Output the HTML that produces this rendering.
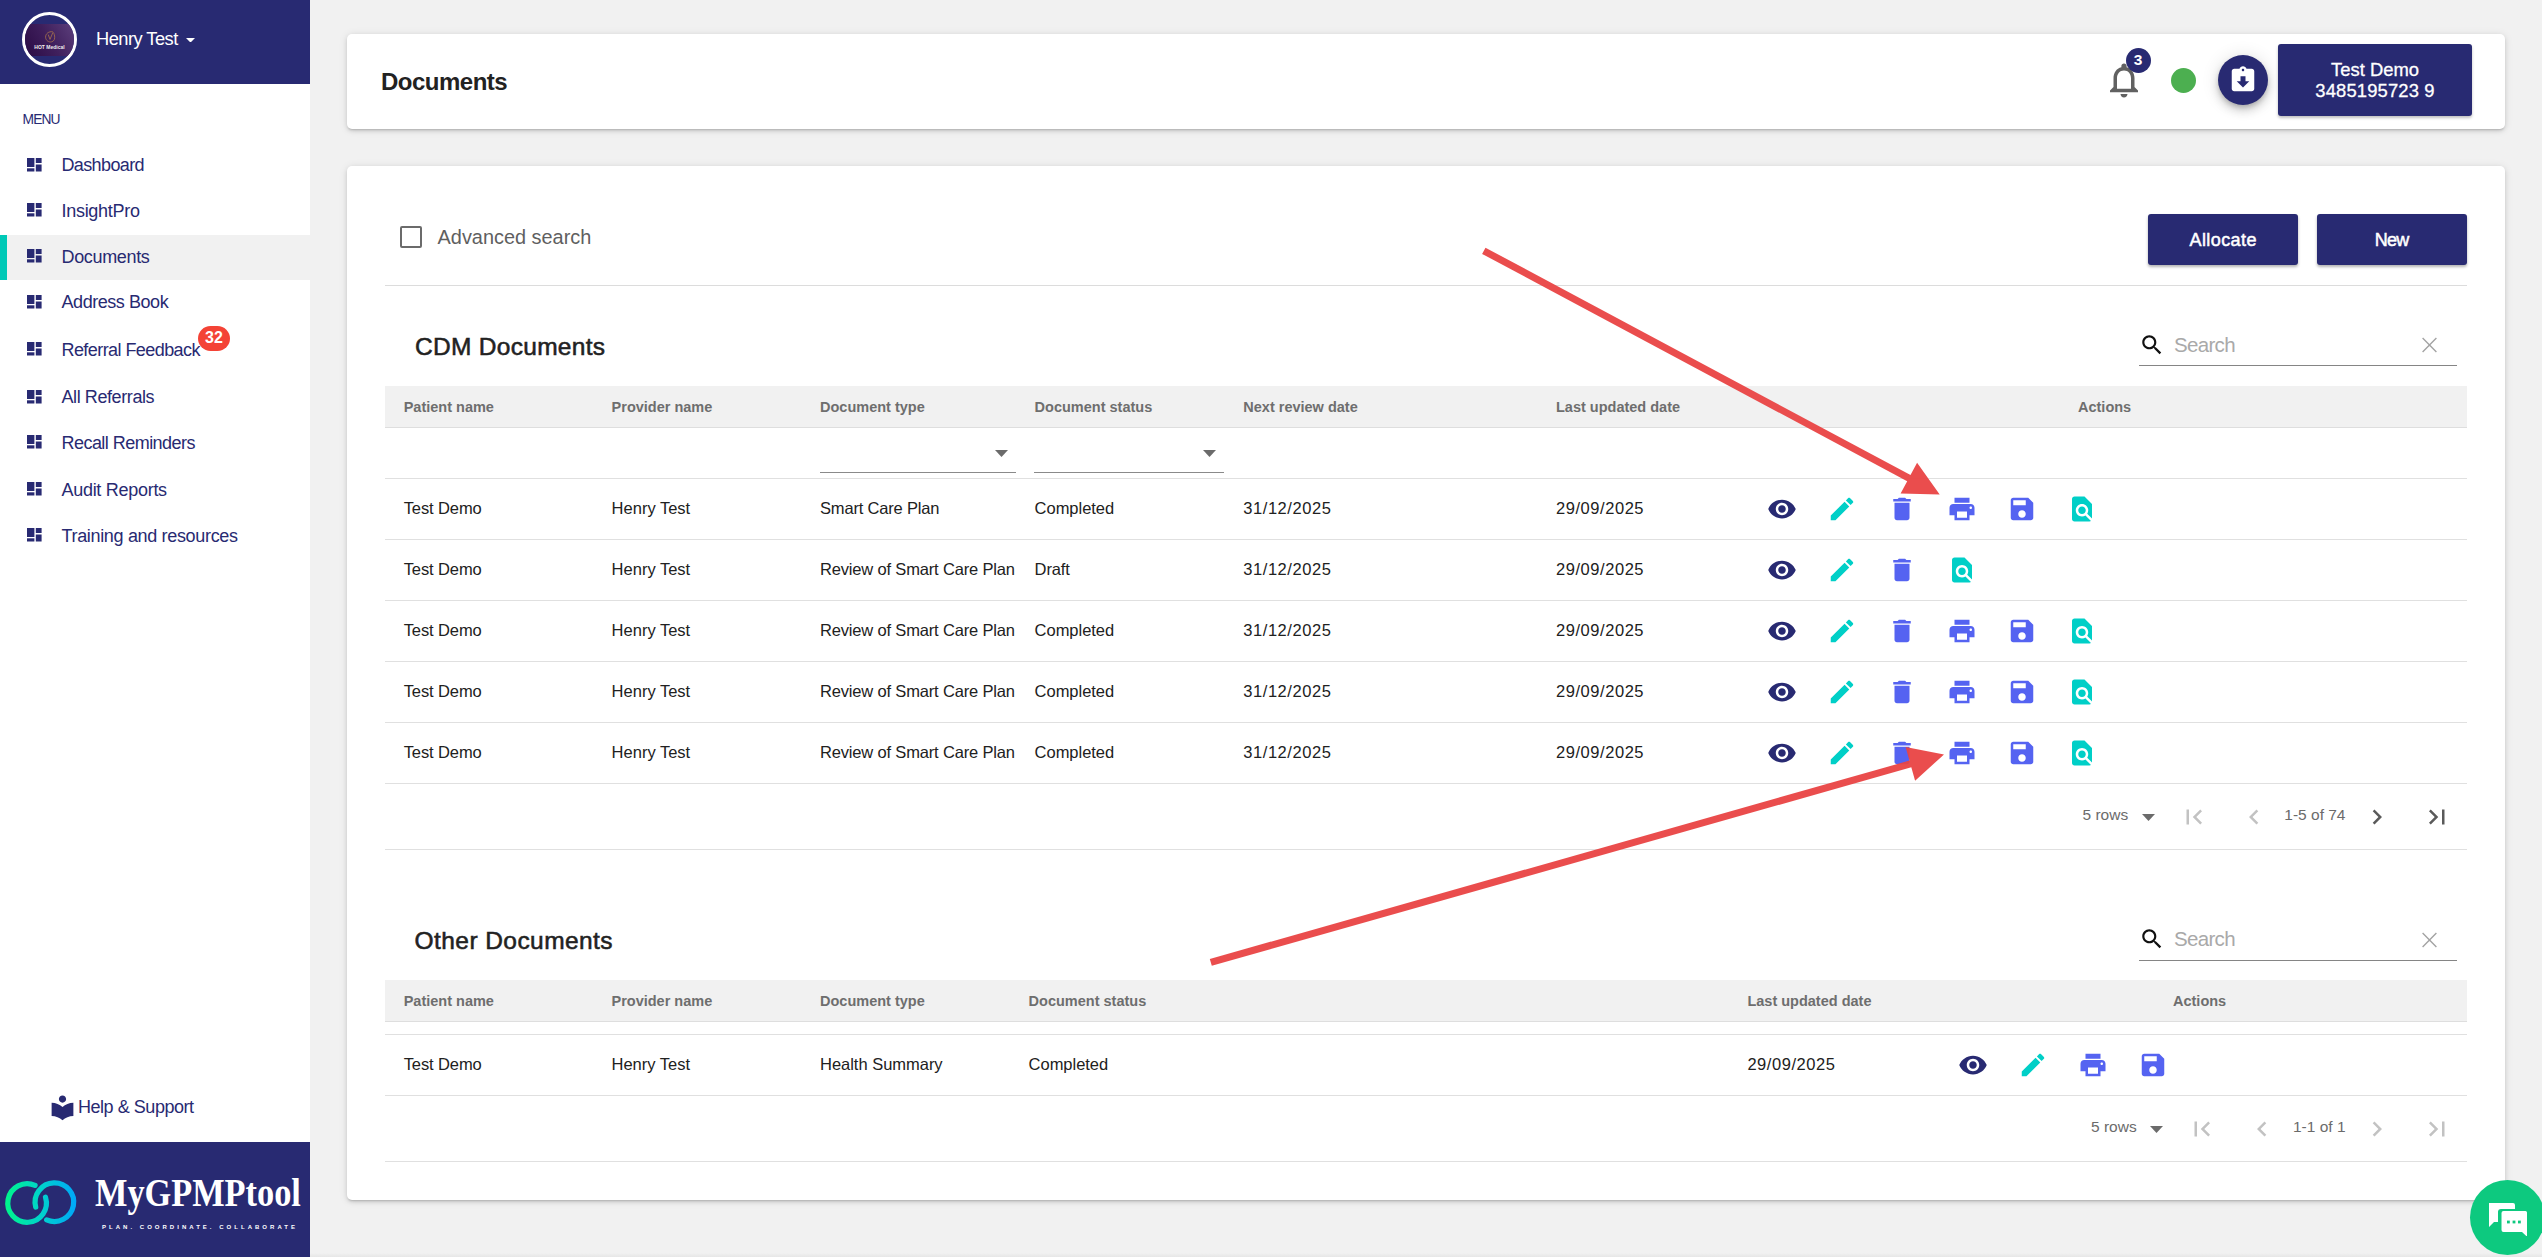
<!DOCTYPE html><html><head><meta charset="utf-8"><style>
html,body{margin:0;padding:0;}
body{width:2542px;height:1257px;background:#f1f1f1;position:relative;overflow:hidden;font-family:"Liberation Sans",sans-serif;}
.a{position:absolute;display:block;}
.t{position:absolute;white-space:nowrap;line-height:1;}
</style></head><body>

<div class="a" style="left:0px;top:0px;width:310px;height:1257px;background:#fff"></div>
<div class="a" style="left:0px;top:0px;width:310px;height:84px;background:#282a72"></div>
<div class="a" style="left:22px;top:12px;width:55px;height:55px;border-radius:50%;background:#282a72;box-sizing:border-box;border:3px solid #fff;overflow:hidden"></div>
<div class="a" style="left:25px;top:15px;width:49px;height:49px;border-radius:50%;overflow:hidden"><div class="a" style="left:0;top:9px;width:49px;height:32px;background:linear-gradient(60deg,#2a0b44 0%,#3f1f5c 50%,#5c3f7c 100%)"></div><div class="a" style="left:0;top:30px;width:49px;text-align:center;font-size:5px;line-height:5px;color:#eee;font-weight:700">HOT Medical</div><svg class="a" style="left:18px;top:15px" width="14" height="14" viewBox="0 0 14 14"><path d="M9.5 1.8C6 1.2 2.5 3.5 2.6 7.2c.1 3.3 3.2 5.4 6.2 4.6 2.6-.7 3.2-3.4 2.8-5.8C11.3 4.2 10.8 2.6 9.5 1.8z" fill="none" stroke="#a8734e" stroke-width="0.8"/><path d="M5.2 4.6L7 9.4 9.8 2.6" fill="none" stroke="#a8734e" stroke-width="0.8"/></svg></div>
<div class="t" style="left:96.0px;top:29.7px;font-size:18.3px;color:#fff;font-weight:400;;letter-spacing:-0.528px">Henry Test</div>
<svg class="a" style="left:186px;top:37.6px" width="9" height="4.6" viewBox="0 0 9 4.6"><path d="M0 0h9L4.5 4.6z" fill="#fff"/></svg>
<div class="t" style="left:22.6px;top:113.2px;font-size:13.8px;color:#282a72;font-weight:400;;letter-spacing:-0.950px">MENU</div>
<div class="a" style="left:0px;top:235px;width:310px;height:45px;background:#f1f1f1"></div>
<div class="a" style="left:0px;top:235px;width:7px;height:45px;background:#00c9b7"></div>
<svg class="a" style="left:27px;top:158px" width="15" height="14" viewBox="0 0 15 14"><g fill="#282a72"><rect x="0" y="0" width="7.4" height="9"/><rect x="0" y="10.3" width="7.4" height="3.2"/><rect x="8.8" y="0" width="5.8" height="5"/><rect x="8.8" y="6.5" width="5.8" height="7"/></g></svg>
<div class="t" style="left:61.5px;top:156.0px;font-size:18px;color:#282a72;font-weight:400;;letter-spacing:-0.631px">Dashboard</div>
<svg class="a" style="left:27px;top:203px" width="15" height="14" viewBox="0 0 15 14"><g fill="#282a72"><rect x="0" y="0" width="7.4" height="9"/><rect x="0" y="10.3" width="7.4" height="3.2"/><rect x="8.8" y="0" width="5.8" height="5"/><rect x="8.8" y="6.5" width="5.8" height="7"/></g></svg>
<div class="t" style="left:61.5px;top:201.6px;font-size:18px;color:#282a72;font-weight:400;;letter-spacing:-0.294px">InsightPro</div>
<svg class="a" style="left:27px;top:249px" width="15" height="14" viewBox="0 0 15 14"><g fill="#282a72"><rect x="0" y="0" width="7.4" height="9"/><rect x="0" y="10.3" width="7.4" height="3.2"/><rect x="8.8" y="0" width="5.8" height="5"/><rect x="8.8" y="6.5" width="5.8" height="7"/></g></svg>
<div class="t" style="left:61.5px;top:247.6px;font-size:18px;color:#282a72;font-weight:400;;letter-spacing:-0.344px">Documents</div>
<svg class="a" style="left:27px;top:295px" width="15" height="14" viewBox="0 0 15 14"><g fill="#282a72"><rect x="0" y="0" width="7.4" height="9"/><rect x="0" y="10.3" width="7.4" height="3.2"/><rect x="8.8" y="0" width="5.8" height="5"/><rect x="8.8" y="6.5" width="5.8" height="7"/></g></svg>
<div class="t" style="left:61.5px;top:293.1px;font-size:18px;color:#282a72;font-weight:400;;letter-spacing:-0.445px">Address Book</div>
<svg class="a" style="left:27px;top:342px" width="15" height="14" viewBox="0 0 15 14"><g fill="#282a72"><rect x="0" y="0" width="7.4" height="9"/><rect x="0" y="10.3" width="7.4" height="3.2"/><rect x="8.8" y="0" width="5.8" height="5"/><rect x="8.8" y="6.5" width="5.8" height="7"/></g></svg>
<div class="t" style="left:61.5px;top:340.6px;font-size:18px;color:#282a72;font-weight:400;;letter-spacing:-0.569px">Referral Feedback</div>
<svg class="a" style="left:27px;top:390px" width="15" height="14" viewBox="0 0 15 14"><g fill="#282a72"><rect x="0" y="0" width="7.4" height="9"/><rect x="0" y="10.3" width="7.4" height="3.2"/><rect x="8.8" y="0" width="5.8" height="5"/><rect x="8.8" y="6.5" width="5.8" height="7"/></g></svg>
<div class="t" style="left:61.5px;top:387.8px;font-size:18px;color:#282a72;font-weight:400;;letter-spacing:-0.413px">All Referrals</div>
<svg class="a" style="left:27px;top:435px" width="15" height="14" viewBox="0 0 15 14"><g fill="#282a72"><rect x="0" y="0" width="7.4" height="9"/><rect x="0" y="10.3" width="7.4" height="3.2"/><rect x="8.8" y="0" width="5.8" height="5"/><rect x="8.8" y="6.5" width="5.8" height="7"/></g></svg>
<div class="t" style="left:61.5px;top:433.7px;font-size:18px;color:#282a72;font-weight:400;;letter-spacing:-0.537px">Recall Reminders</div>
<svg class="a" style="left:27px;top:482px" width="15" height="14" viewBox="0 0 15 14"><g fill="#282a72"><rect x="0" y="0" width="7.4" height="9"/><rect x="0" y="10.3" width="7.4" height="3.2"/><rect x="8.8" y="0" width="5.8" height="5"/><rect x="8.8" y="6.5" width="5.8" height="7"/></g></svg>
<div class="t" style="left:61.5px;top:480.8px;font-size:18px;color:#282a72;font-weight:400;;letter-spacing:-0.288px">Audit Reports</div>
<svg class="a" style="left:27px;top:528px" width="15" height="14" viewBox="0 0 15 14"><g fill="#282a72"><rect x="0" y="0" width="7.4" height="9"/><rect x="0" y="10.3" width="7.4" height="3.2"/><rect x="8.8" y="0" width="5.8" height="5"/><rect x="8.8" y="6.5" width="5.8" height="7"/></g></svg>
<div class="t" style="left:61.5px;top:526.5px;font-size:18px;color:#282a72;font-weight:400;;letter-spacing:-0.331px">Training and resources</div>
<div class="a" style="left:198px;top:325.5px;width:32px;height:25px;background:#f44336;border-radius:13px"></div>
<div class="t" style="left:198.0px;top:329.7px;font-size:16px;color:#fff;font-weight:700;"><div style="width:32px;text-align:center">32</div></div>
<svg class="a" style="left:47.5px;top:1092.5px;" width="29" height="29" viewBox="0 0 24 24"><path fill="#282a72" d="M12 11.55C9.64 9.35 6.48 8 3 8v11c3.48 0 6.64 1.35 9 3.55 2.36-2.19 5.52-3.550 9-3.55V8c-3.48 0-6.64 1.35-9 3.55zM12 8c1.66 0 3-1.34 3-3s-1.34-3-3-3-3 1.34-3 3 1.34 3 3 3z"/></svg>
<div class="t" style="left:77.9px;top:1098.1px;font-size:18px;color:#282a72;font-weight:400;letter-spacing:-0.45px">Help &amp; Support</div>
<div class="a" style="left:0px;top:1142px;width:310px;height:115px;background:#282a72"></div>
<svg class="a" style="left:0px;top:1170px" width="85" height="65" viewBox="0 1170 85 65"><defs><linearGradient id="lg" gradientUnits="userSpaceOnUse" x1="5" y1="0" x2="77" y2="0"><stop offset="0" stop-color="#00f58a"/><stop offset="0.5" stop-color="#00d2cc"/><stop offset="1" stop-color="#00a6fa"/></linearGradient></defs>
<g fill="none" stroke="url(#lg)" stroke-width="5.2" stroke-linecap="round"><path d="M45.5 1197.2 A19.3 19.3 0 1 1 35.07 1185.4"/><path d="M35.72 1207.06 A19.3 19.3 0 1 1 46.64 1219.87"/></g></svg>
<div class="t" style="left:95.3px;top:1172.5px;font-size:40px;color:#fff;font-weight:700;font-family:'Liberation Serif',serif;transform:scaleX(0.858);transform-origin:0 0">MyGPMPtool</div>
<div class="t" style="left:102.0px;top:1223.9px;font-size:6px;color:#fff;font-weight:700;letter-spacing:3.02px">PLAN. COORDINATE. COLLABORATE</div>
<div class="a" style="left:347px;top:34px;width:2158px;height:95px;background:#fff;border-radius:5px;box-shadow:0px 2px 2px -1px rgba(0,0,0,0.15),0px 2px 4px 0px rgba(0,0,0,0.1),0px 1px 8px 0px rgba(0,0,0,0.1)"></div>
<div class="t" style="left:381.0px;top:69.9px;font-size:24px;color:#222;font-weight:700;letter-spacing:-0.5px">Documents</div>
<svg class="a" style="left:2103.0px;top:58.6px;" width="42" height="42" viewBox="0 0 24 24"><path fill="#616161" d="M12 22c1.1 0 2-.9 2-2h-4c0 1.1.89 2 2 2zm6-6v-5c0-3.07-1.64-5.64-4.5-6.32V4c0-.83-.67-1.5-1.5-1.5s-1.5.67-1.5 1.5v.68C7.63 5.36 6 7.92 6 11v5l-2 2v1h16v-1l-2-2zm-2 1H8v-6c0-2.48 1.51-4.5 4-4.5s4 2.02 4 4.5v6z"/></svg>
<div class="a" style="left:2125.5px;top:47.5px;width:25px;height:25px;background:#282a72;border-radius:50%"></div>
<div class="t" style="left:2125.5px;top:51.9px;font-size:15.5px;color:#fff;font-weight:700;"><div style="width:25px;text-align:center">3</div></div>
<div class="a" style="left:2170.5px;top:67.5px;width:25px;height:25px;background:#4caf50;border-radius:50%"></div>
<div class="a" style="left:2218px;top:55px;width:50px;height:50px;background:#282a72;border-radius:50%;box-shadow:0px 3px 5px -1px rgba(0,0,0,0.2),0px 6px 10px 0px rgba(0,0,0,0.14),0px 1px 18px 0px rgba(0,0,0,0.12)"></div>
<svg class="a" style="left:2228.0px;top:65.0px;" width="30" height="30" viewBox="0 0 24 24"><path fill="#fff" d="M19 3h-4.18C14.4 1.84 13.3 1 12 1c-1.3 0-2.4.84-2.82 2H5c-1.1 0-2 .9-2 2v14c0 1.1.9 2 2 2h14c1.1 0 2-.9 2-2V5c0-1.1-.9-2-2-2zm-7 0c.55 0 1 .45 1 1s-.45 1-1 1-1-.45-1-1 .45-1 1-1zm0 15l-5-5h3V9h4v4h3l-5 5z"/></svg>
<div class="a" style="left:2278px;top:44px;width:194px;height:72px;background:#282a72;border-radius:3px;box-shadow:0 2px 3px rgba(0,0,0,0.25)"></div>
<div class="t" style="left:2278.0px;top:60.7px;font-size:18.4px;color:#fff;font-weight:400;-webkit-text-stroke:0.3px #fff"><div style="width:194px;text-align:center">Test Demo</div></div>
<div class="t" style="left:2278.0px;top:81.6px;font-size:18.4px;color:#fff;font-weight:400;-webkit-text-stroke:0.3px #fff"><div style="width:194px;text-align:center;letter-spacing:0.15px">3485195723 9</div></div>
<div class="a" style="left:347px;top:166px;width:2158px;height:1034px;background:#fff;border-radius:5px;box-shadow:0px 2px 2px -1px rgba(0,0,0,0.15),0px 2px 4px 0px rgba(0,0,0,0.1),0px 1px 8px 0px rgba(0,0,0,0.1)"></div>
<div class="a" style="left:400px;top:226px;width:22px;height:22px;box-sizing:border-box;border:2px solid #6b6b6b;border-radius:2px"></div>
<div class="t" style="left:437.6px;top:228.0px;font-size:19.9px;color:#5f5f5f;font-weight:400;">Advanced search</div>
<div class="a" style="left:2148px;top:214px;width:150px;height:51px;background:#282a72;border-radius:3px;box-shadow:0 2px 3px rgba(0,0,0,0.3)"></div>
<div class="a" style="left:2317px;top:214px;width:150px;height:51px;background:#282a72;border-radius:3px;box-shadow:0 2px 3px rgba(0,0,0,0.3)"></div>
<div class="t" style="left:2148.0px;top:230.8px;font-size:18px;color:#fff;font-weight:400;-webkit-text-stroke:0.5px #fff"><div style="width:150px;text-align:center;letter-spacing:0.42px;text-indent:0.42px">Allocate</div></div>
<div class="t" style="left:2317.0px;top:230.8px;font-size:18px;color:#fff;font-weight:400;-webkit-text-stroke:0.5px #fff"><div style="width:150px;text-align:center;letter-spacing:-0.8px;text-indent:-0.8px">New</div></div>
<div class="a" style="left:385px;top:285px;width:2082px;height:1px;background:#dcdcdc"></div>
<div class="t" style="left:415.0px;top:334.6px;font-size:24.5px;color:#222;font-weight:400;-webkit-text-stroke:0.55px #222;letter-spacing:0.292px">CDM Documents</div>
<div class="a" style="left:2139px;top:365px;width:318px;height:1px;background:#858585"></div>
<svg class="a" style="left:2138.5px;top:331.5px;" width="26" height="26" viewBox="0 0 24 24"><path fill="#111" d="M15.5 14h-.79l-.28-.27C15.41 12.59 16 11.11 16 9.5 16 5.91 13.09 3 9.5 3S3 5.91 3 9.5 5.910 16 9.5 16c1.61 0 3.09-.59 4.23-1.57l.27.28v.79l5 4.99L20.49 19l-4.99-5zm-6 0C7.01 14 5 11.99 5 9.5S7.01 5 9.5 5 14 7.01 14 9.5 11.99 14 9.5 14z"/></svg>
<div class="t" style="left:2174.0px;top:334.9px;font-size:20.5px;color:#a9a9a9;font-weight:400;;letter-spacing:-0.670px">Search</div>
<svg class="a" style="left:2420px;top:335px" width="20" height="20" viewBox="0 0 20 20"><path d="M2.6 3.1L16.4 16.9M16.4 3.1L2.6 16.9" stroke="#a3a3a3" stroke-width="1.4" fill="none"/></svg>
<div class="a" style="left:385px;top:386px;width:2082px;height:41px;background:#f1f1f1"></div>
<div class="a" style="left:385px;top:427px;width:2082px;height:1px;background:#dedede"></div>
<div class="t" style="left:403.7px;top:399.7px;font-size:14.5px;color:#6e6e6e;font-weight:700;">Patient name</div>
<div class="t" style="left:611.6px;top:399.7px;font-size:14.5px;color:#6e6e6e;font-weight:700;">Provider name</div>
<div class="t" style="left:820.0px;top:399.7px;font-size:14.5px;color:#6e6e6e;font-weight:700;">Document type</div>
<div class="t" style="left:1034.6px;top:399.7px;font-size:14.5px;color:#6e6e6e;font-weight:700;">Document status</div>
<div class="t" style="left:1243.3px;top:399.7px;font-size:14.5px;color:#6e6e6e;font-weight:700;">Next review date</div>
<div class="t" style="left:1556.0px;top:399.7px;font-size:14.5px;color:#6e6e6e;font-weight:700;">Last updated date</div>
<div class="t" style="left:2078.0px;top:399.7px;font-size:14.5px;color:#6e6e6e;font-weight:700;">Actions</div>
<div class="a" style="left:820px;top:472px;width:196px;height:1.2px;background:#8a8a8a"></div>
<div class="a" style="left:1034px;top:472px;width:190px;height:1.2px;background:#8a8a8a"></div>
<svg class="a" style="left:995px;top:450px" width="13" height="7" viewBox="0 0 13 7"><path d="M0 0h13L6.5 7z" fill="#6b6b6b"/></svg>
<svg class="a" style="left:1203px;top:450px" width="13" height="7" viewBox="0 0 13 7"><path d="M0 0h13L6.5 7z" fill="#6b6b6b"/></svg>
<div class="a" style="left:385px;top:478px;width:2082px;height:1px;background:#e0e0e0"></div>
<div class="t" style="left:403.7px;top:499.6px;font-size:16.5px;color:#212121;font-weight:400;;letter-spacing:-0.106px">Test Demo</div>
<div class="t" style="left:611.6px;top:499.6px;font-size:16.5px;color:#212121;font-weight:400;;letter-spacing:0.006px">Henry Test</div>
<div class="t" style="left:820.0px;top:499.6px;font-size:16.5px;color:#212121;font-weight:400;;letter-spacing:-0.182px">Smart Care Plan</div>
<div class="t" style="left:1034.6px;top:499.6px;font-size:16.5px;color:#212121;font-weight:400;;letter-spacing:-0.025px">Completed</div>
<div class="t" style="left:1243.3px;top:499.6px;font-size:16.5px;color:#212121;font-weight:400;letter-spacing:0.55px">31/12/2025</div>
<div class="t" style="left:1556.0px;top:499.6px;font-size:16.5px;color:#212121;font-weight:400;letter-spacing:0.55px">29/09/2025</div>
<svg class="a" style="left:1766.5px;top:494.0px;" width="30" height="30" viewBox="0 0 24 24"><path fill="#282a72" d="M12 4.5C7 4.5 2.73 7.61 1 12c1.730 4.39 6 7.5 11 7.5s9.27-3.11 11-7.5c-1.73-4.39-6-7.5-11-7.5zM12 17c-2.76 0-5-2.24-5-5s2.24-5 5-5 5 2.240 5 5-2.24 5-5 5zm0-8c-1.66 0-3 1.34-3 3s1.34 3 3 3 3-1.34 3-3-1.34-3-3-3z"/></svg>
<svg class="a" style="left:1826.5px;top:494.0px;" width="30" height="30" viewBox="0 0 24 24"><path fill="#00cfc7" d="M3 17.25V21h3.75L17.81 9.94l-3.75-3.75L3 17.25zM20.71 7.04c.39-.39.39-1.02 0-1.41l-2.34-2.34c-.39-.39-1.02-.39-1.41 0l-1.83 1.83 3.75 3.75 1.83-1.83z"/></svg>
<svg class="a" style="left:1886.5px;top:494.0px;" width="30" height="30" viewBox="0 0 24 24"><path fill="#5563f1" d="M6 19c0 1.1.9 2 2 2h8c1.1 0 2-.9 2-2V7H6v12zM19 4h-3.5l-1-1h-5l-1 1H5v2h14V4z"/></svg>
<svg class="a" style="left:1946.5px;top:494.0px;" width="30" height="30" viewBox="0 0 24 24"><path fill="#5563f1" d="M19 8H5c-1.66 0-3 1.34-3 3v6h4v4h12v-4h4v-6c0-1.66-1.34-3-3-3zm-3 11H8v-5h8v5zm3-7c-.55 0-1-.45-1-1s.45-1 1-1 1 .45 1 1-.45 1-1 1zm-1-9H6v4h12V3z"/></svg>
<svg class="a" style="left:2006.5px;top:494.0px;" width="30" height="30" viewBox="0 0 24 24"><path fill="#5563f1" d="M17 3H5c-1.11 0-2 .9-2 2v14c0 1.1.89 2 2 2h14c1.1 0 2-.9 2-2V7l-4-4zm-5 16c-1.66 0-3-1.34-3-3s1.34-3 3-3 3 1.34 3 3-1.34 3-3 3zm3-10H5V5h10v4z"/></svg>
<svg class="a" style="left:2066.5px;top:494.0px;" width="30" height="30" viewBox="0 0 24 24"><path fill="#00cfc7" d="M20 19.59V8l-6-6H6c-1.1 0-1.99.9-1.99 2L4 20c0 1.1.89 2 1.99 2H18c.45 0 .85-.15 1.19-.4l-4.43-4.43c-.8.52-1.74.83-2.76.83-2.76 0-5-2.24-5-5s2.24-5 5-5 5 2.24 5 5c0 1.02-.31 1.96-.83 2.75L20 19.59zM9 13c0 1.66 1.34 3 3 3s3-1.34 3-3-1.34-3-3-3-3 1.34-3 3z"/></svg>
<div class="a" style="left:385px;top:539px;width:2082px;height:1px;background:#e0e0e0"></div>
<div class="t" style="left:403.7px;top:560.6px;font-size:16.5px;color:#212121;font-weight:400;;letter-spacing:-0.106px">Test Demo</div>
<div class="t" style="left:611.6px;top:560.6px;font-size:16.5px;color:#212121;font-weight:400;;letter-spacing:0.006px">Henry Test</div>
<div class="t" style="left:820.0px;top:560.6px;font-size:16.5px;color:#212121;font-weight:400;;letter-spacing:-0.171px">Review of Smart Care Plan</div>
<div class="t" style="left:1034.6px;top:560.6px;font-size:16.5px;color:#212121;font-weight:400;;letter-spacing:-0.113px">Draft</div>
<div class="t" style="left:1243.3px;top:560.6px;font-size:16.5px;color:#212121;font-weight:400;letter-spacing:0.55px">31/12/2025</div>
<div class="t" style="left:1556.0px;top:560.6px;font-size:16.5px;color:#212121;font-weight:400;letter-spacing:0.55px">29/09/2025</div>
<svg class="a" style="left:1766.5px;top:555.0px;" width="30" height="30" viewBox="0 0 24 24"><path fill="#282a72" d="M12 4.5C7 4.5 2.73 7.61 1 12c1.730 4.39 6 7.5 11 7.5s9.27-3.11 11-7.5c-1.73-4.39-6-7.5-11-7.5zM12 17c-2.76 0-5-2.24-5-5s2.24-5 5-5 5 2.240 5 5-2.24 5-5 5zm0-8c-1.66 0-3 1.34-3 3s1.34 3 3 3 3-1.34 3-3-1.34-3-3-3z"/></svg>
<svg class="a" style="left:1826.5px;top:555.0px;" width="30" height="30" viewBox="0 0 24 24"><path fill="#00cfc7" d="M3 17.25V21h3.75L17.81 9.94l-3.75-3.75L3 17.25zM20.71 7.04c.39-.39.39-1.02 0-1.41l-2.34-2.34c-.39-.39-1.02-.39-1.41 0l-1.83 1.83 3.75 3.75 1.83-1.83z"/></svg>
<svg class="a" style="left:1886.5px;top:555.0px;" width="30" height="30" viewBox="0 0 24 24"><path fill="#5563f1" d="M6 19c0 1.1.9 2 2 2h8c1.1 0 2-.9 2-2V7H6v12zM19 4h-3.5l-1-1h-5l-1 1H5v2h14V4z"/></svg>
<svg class="a" style="left:1946.5px;top:555.0px;" width="30" height="30" viewBox="0 0 24 24"><path fill="#00cfc7" d="M20 19.59V8l-6-6H6c-1.1 0-1.99.9-1.99 2L4 20c0 1.1.89 2 1.99 2H18c.45 0 .85-.15 1.19-.4l-4.43-4.43c-.8.52-1.74.83-2.76.83-2.76 0-5-2.24-5-5s2.24-5 5-5 5 2.24 5 5c0 1.02-.31 1.96-.83 2.75L20 19.59zM9 13c0 1.66 1.34 3 3 3s3-1.34 3-3-1.34-3-3-3-3 1.34-3 3z"/></svg>
<div class="a" style="left:385px;top:600px;width:2082px;height:1px;background:#e0e0e0"></div>
<div class="t" style="left:403.7px;top:621.6px;font-size:16.5px;color:#212121;font-weight:400;;letter-spacing:-0.106px">Test Demo</div>
<div class="t" style="left:611.6px;top:621.6px;font-size:16.5px;color:#212121;font-weight:400;;letter-spacing:0.006px">Henry Test</div>
<div class="t" style="left:820.0px;top:621.6px;font-size:16.5px;color:#212121;font-weight:400;;letter-spacing:-0.171px">Review of Smart Care Plan</div>
<div class="t" style="left:1034.6px;top:621.6px;font-size:16.5px;color:#212121;font-weight:400;;letter-spacing:-0.025px">Completed</div>
<div class="t" style="left:1243.3px;top:621.6px;font-size:16.5px;color:#212121;font-weight:400;letter-spacing:0.55px">31/12/2025</div>
<div class="t" style="left:1556.0px;top:621.6px;font-size:16.5px;color:#212121;font-weight:400;letter-spacing:0.55px">29/09/2025</div>
<svg class="a" style="left:1766.5px;top:616.0px;" width="30" height="30" viewBox="0 0 24 24"><path fill="#282a72" d="M12 4.5C7 4.5 2.73 7.61 1 12c1.730 4.39 6 7.5 11 7.5s9.27-3.11 11-7.5c-1.73-4.39-6-7.5-11-7.5zM12 17c-2.76 0-5-2.24-5-5s2.24-5 5-5 5 2.240 5 5-2.24 5-5 5zm0-8c-1.66 0-3 1.34-3 3s1.34 3 3 3 3-1.34 3-3-1.34-3-3-3z"/></svg>
<svg class="a" style="left:1826.5px;top:616.0px;" width="30" height="30" viewBox="0 0 24 24"><path fill="#00cfc7" d="M3 17.25V21h3.75L17.81 9.94l-3.75-3.75L3 17.25zM20.71 7.04c.39-.39.39-1.02 0-1.41l-2.34-2.34c-.39-.39-1.02-.39-1.41 0l-1.83 1.83 3.75 3.75 1.83-1.83z"/></svg>
<svg class="a" style="left:1886.5px;top:616.0px;" width="30" height="30" viewBox="0 0 24 24"><path fill="#5563f1" d="M6 19c0 1.1.9 2 2 2h8c1.1 0 2-.9 2-2V7H6v12zM19 4h-3.5l-1-1h-5l-1 1H5v2h14V4z"/></svg>
<svg class="a" style="left:1946.5px;top:616.0px;" width="30" height="30" viewBox="0 0 24 24"><path fill="#5563f1" d="M19 8H5c-1.66 0-3 1.34-3 3v6h4v4h12v-4h4v-6c0-1.66-1.34-3-3-3zm-3 11H8v-5h8v5zm3-7c-.55 0-1-.45-1-1s.45-1 1-1 1 .45 1 1-.45 1-1 1zm-1-9H6v4h12V3z"/></svg>
<svg class="a" style="left:2006.5px;top:616.0px;" width="30" height="30" viewBox="0 0 24 24"><path fill="#5563f1" d="M17 3H5c-1.11 0-2 .9-2 2v14c0 1.1.89 2 2 2h14c1.1 0 2-.9 2-2V7l-4-4zm-5 16c-1.66 0-3-1.34-3-3s1.34-3 3-3 3 1.34 3 3-1.34 3-3 3zm3-10H5V5h10v4z"/></svg>
<svg class="a" style="left:2066.5px;top:616.0px;" width="30" height="30" viewBox="0 0 24 24"><path fill="#00cfc7" d="M20 19.59V8l-6-6H6c-1.1 0-1.99.9-1.99 2L4 20c0 1.1.89 2 1.99 2H18c.45 0 .85-.15 1.19-.4l-4.43-4.43c-.8.52-1.74.83-2.76.83-2.76 0-5-2.24-5-5s2.24-5 5-5 5 2.24 5 5c0 1.02-.31 1.96-.83 2.75L20 19.59zM9 13c0 1.66 1.34 3 3 3s3-1.34 3-3-1.34-3-3-3-3 1.34-3 3z"/></svg>
<div class="a" style="left:385px;top:661px;width:2082px;height:1px;background:#e0e0e0"></div>
<div class="t" style="left:403.7px;top:682.6px;font-size:16.5px;color:#212121;font-weight:400;;letter-spacing:-0.106px">Test Demo</div>
<div class="t" style="left:611.6px;top:682.6px;font-size:16.5px;color:#212121;font-weight:400;;letter-spacing:0.006px">Henry Test</div>
<div class="t" style="left:820.0px;top:682.6px;font-size:16.5px;color:#212121;font-weight:400;;letter-spacing:-0.171px">Review of Smart Care Plan</div>
<div class="t" style="left:1034.6px;top:682.6px;font-size:16.5px;color:#212121;font-weight:400;;letter-spacing:-0.025px">Completed</div>
<div class="t" style="left:1243.3px;top:682.6px;font-size:16.5px;color:#212121;font-weight:400;letter-spacing:0.55px">31/12/2025</div>
<div class="t" style="left:1556.0px;top:682.6px;font-size:16.5px;color:#212121;font-weight:400;letter-spacing:0.55px">29/09/2025</div>
<svg class="a" style="left:1766.5px;top:677.0px;" width="30" height="30" viewBox="0 0 24 24"><path fill="#282a72" d="M12 4.5C7 4.5 2.73 7.61 1 12c1.730 4.39 6 7.5 11 7.5s9.27-3.11 11-7.5c-1.73-4.39-6-7.5-11-7.5zM12 17c-2.76 0-5-2.24-5-5s2.24-5 5-5 5 2.240 5 5-2.24 5-5 5zm0-8c-1.66 0-3 1.34-3 3s1.34 3 3 3 3-1.34 3-3-1.34-3-3-3z"/></svg>
<svg class="a" style="left:1826.5px;top:677.0px;" width="30" height="30" viewBox="0 0 24 24"><path fill="#00cfc7" d="M3 17.25V21h3.75L17.81 9.94l-3.75-3.75L3 17.25zM20.71 7.04c.39-.39.39-1.02 0-1.41l-2.34-2.34c-.39-.39-1.02-.39-1.41 0l-1.83 1.83 3.75 3.75 1.83-1.83z"/></svg>
<svg class="a" style="left:1886.5px;top:677.0px;" width="30" height="30" viewBox="0 0 24 24"><path fill="#5563f1" d="M6 19c0 1.1.9 2 2 2h8c1.1 0 2-.9 2-2V7H6v12zM19 4h-3.5l-1-1h-5l-1 1H5v2h14V4z"/></svg>
<svg class="a" style="left:1946.5px;top:677.0px;" width="30" height="30" viewBox="0 0 24 24"><path fill="#5563f1" d="M19 8H5c-1.66 0-3 1.34-3 3v6h4v4h12v-4h4v-6c0-1.66-1.34-3-3-3zm-3 11H8v-5h8v5zm3-7c-.55 0-1-.45-1-1s.45-1 1-1 1 .45 1 1-.45 1-1 1zm-1-9H6v4h12V3z"/></svg>
<svg class="a" style="left:2006.5px;top:677.0px;" width="30" height="30" viewBox="0 0 24 24"><path fill="#5563f1" d="M17 3H5c-1.11 0-2 .9-2 2v14c0 1.1.89 2 2 2h14c1.1 0 2-.9 2-2V7l-4-4zm-5 16c-1.66 0-3-1.34-3-3s1.34-3 3-3 3 1.34 3 3-1.34 3-3 3zm3-10H5V5h10v4z"/></svg>
<svg class="a" style="left:2066.5px;top:677.0px;" width="30" height="30" viewBox="0 0 24 24"><path fill="#00cfc7" d="M20 19.59V8l-6-6H6c-1.1 0-1.99.9-1.99 2L4 20c0 1.1.89 2 1.99 2H18c.45 0 .85-.15 1.19-.4l-4.43-4.43c-.8.52-1.74.83-2.76.83-2.76 0-5-2.24-5-5s2.24-5 5-5 5 2.24 5 5c0 1.02-.31 1.96-.83 2.75L20 19.59zM9 13c0 1.66 1.34 3 3 3s3-1.34 3-3-1.34-3-3-3-3 1.34-3 3z"/></svg>
<div class="a" style="left:385px;top:722px;width:2082px;height:1px;background:#e0e0e0"></div>
<div class="t" style="left:403.7px;top:743.6px;font-size:16.5px;color:#212121;font-weight:400;;letter-spacing:-0.106px">Test Demo</div>
<div class="t" style="left:611.6px;top:743.6px;font-size:16.5px;color:#212121;font-weight:400;;letter-spacing:0.006px">Henry Test</div>
<div class="t" style="left:820.0px;top:743.6px;font-size:16.5px;color:#212121;font-weight:400;;letter-spacing:-0.171px">Review of Smart Care Plan</div>
<div class="t" style="left:1034.6px;top:743.6px;font-size:16.5px;color:#212121;font-weight:400;;letter-spacing:-0.025px">Completed</div>
<div class="t" style="left:1243.3px;top:743.6px;font-size:16.5px;color:#212121;font-weight:400;letter-spacing:0.55px">31/12/2025</div>
<div class="t" style="left:1556.0px;top:743.6px;font-size:16.5px;color:#212121;font-weight:400;letter-spacing:0.55px">29/09/2025</div>
<svg class="a" style="left:1766.5px;top:738.0px;" width="30" height="30" viewBox="0 0 24 24"><path fill="#282a72" d="M12 4.5C7 4.5 2.73 7.61 1 12c1.730 4.39 6 7.5 11 7.5s9.27-3.11 11-7.5c-1.73-4.39-6-7.5-11-7.5zM12 17c-2.76 0-5-2.24-5-5s2.24-5 5-5 5 2.240 5 5-2.24 5-5 5zm0-8c-1.66 0-3 1.34-3 3s1.34 3 3 3 3-1.34 3-3-1.34-3-3-3z"/></svg>
<svg class="a" style="left:1826.5px;top:738.0px;" width="30" height="30" viewBox="0 0 24 24"><path fill="#00cfc7" d="M3 17.25V21h3.75L17.81 9.94l-3.75-3.75L3 17.25zM20.71 7.04c.39-.39.39-1.02 0-1.41l-2.34-2.34c-.39-.39-1.02-.39-1.41 0l-1.83 1.83 3.75 3.75 1.83-1.83z"/></svg>
<svg class="a" style="left:1886.5px;top:738.0px;" width="30" height="30" viewBox="0 0 24 24"><path fill="#5563f1" d="M6 19c0 1.1.9 2 2 2h8c1.1 0 2-.9 2-2V7H6v12zM19 4h-3.5l-1-1h-5l-1 1H5v2h14V4z"/></svg>
<svg class="a" style="left:1946.5px;top:738.0px;" width="30" height="30" viewBox="0 0 24 24"><path fill="#5563f1" d="M19 8H5c-1.66 0-3 1.34-3 3v6h4v4h12v-4h4v-6c0-1.66-1.34-3-3-3zm-3 11H8v-5h8v5zm3-7c-.55 0-1-.45-1-1s.45-1 1-1 1 .45 1 1-.45 1-1 1zm-1-9H6v4h12V3z"/></svg>
<svg class="a" style="left:2006.5px;top:738.0px;" width="30" height="30" viewBox="0 0 24 24"><path fill="#5563f1" d="M17 3H5c-1.11 0-2 .9-2 2v14c0 1.1.89 2 2 2h14c1.1 0 2-.9 2-2V7l-4-4zm-5 16c-1.66 0-3-1.34-3-3s1.34-3 3-3 3 1.34 3 3-1.34 3-3 3zm3-10H5V5h10v4z"/></svg>
<svg class="a" style="left:2066.5px;top:738.0px;" width="30" height="30" viewBox="0 0 24 24"><path fill="#00cfc7" d="M20 19.59V8l-6-6H6c-1.1 0-1.99.9-1.99 2L4 20c0 1.1.89 2 1.99 2H18c.45 0 .85-.15 1.19-.4l-4.43-4.43c-.8.52-1.74.83-2.76.83-2.76 0-5-2.24-5-5s2.24-5 5-5 5 2.24 5 5c0 1.02-.31 1.96-.83 2.75L20 19.59zM9 13c0 1.66 1.34 3 3 3s3-1.34 3-3-1.34-3-3-3-3 1.34-3 3z"/></svg>
<div class="a" style="left:385px;top:783px;width:2082px;height:1px;background:#e0e0e0"></div>
<div class="t" style="left:2082.5px;top:806.9px;font-size:15.5px;color:#6b6b6b;font-weight:400;">5 rows</div>
<svg class="a" style="left:2141.5px;top:813.5px" width="13" height="7" viewBox="0 0 13 7"><path d="M0 0h13L6.5 7z" fill="#6b6b6b"/></svg>
<svg class="a" style="left:2178.7px;top:801.7px;" width="30" height="30" viewBox="0 0 24 24"><path fill="#c2c2c2" d="M18.41 16.59L13.82 12l4.59-4.59L17 6l-6 6 6 6zM6 6h2v12H6z"/></svg>
<svg class="a" style="left:2238.5px;top:801.7px;" width="30" height="30" viewBox="0 0 24 24"><path fill="#c2c2c2" d="M15.41 7.41L14 6l-6 6 6 6 1.41-1.41L10.83 12z"/></svg>
<div class="t" style="left:2284.3px;top:806.9px;font-size:15.5px;color:#6b6b6b;font-weight:400;">1-5 of 74</div>
<svg class="a" style="left:2362.0px;top:801.7px;" width="30" height="30" viewBox="0 0 24 24"><path fill="#5a5a5a" d="M10 6L8.59 7.41 13.17 12l-4.58 4.59L10 18l6-6z"/></svg>
<svg class="a" style="left:2422.0px;top:801.7px;" width="30" height="30" viewBox="0 0 24 24"><path fill="#5a5a5a" d="M5.59 7.41L10.18 12l-4.59 4.59L7 18l6-6-6-6zM16 6h2v12h-2z"/></svg>
<div class="a" style="left:385px;top:849px;width:2082px;height:1px;background:#e0e0e0"></div>
<div class="t" style="left:414.6px;top:928.7px;font-size:24.5px;color:#222;font-weight:400;-webkit-text-stroke:0.55px #222;letter-spacing:0.429px">Other Documents</div>
<div class="a" style="left:2139px;top:959.5px;width:318px;height:1px;background:#858585"></div>
<svg class="a" style="left:2138.5px;top:926.0px;" width="26" height="26" viewBox="0 0 24 24"><path fill="#111" d="M15.5 14h-.79l-.28-.27C15.41 12.59 16 11.11 16 9.5 16 5.91 13.09 3 9.5 3S3 5.91 3 9.5 5.910 16 9.5 16c1.61 0 3.09-.59 4.23-1.57l.27.28v.79l5 4.99L20.49 19l-4.99-5zm-6 0C7.01 14 5 11.99 5 9.5S7.01 5 9.5 5 14 7.01 14 9.5 11.99 14 9.5 14z"/></svg>
<div class="t" style="left:2174.0px;top:929.4px;font-size:20.5px;color:#a9a9a9;font-weight:400;;letter-spacing:-0.670px">Search</div>
<svg class="a" style="left:2420px;top:929.5px" width="20" height="20" viewBox="0 0 20 20"><path d="M2.6 3.1L16.4 16.9M16.4 3.1L2.6 16.9" stroke="#a3a3a3" stroke-width="1.4" fill="none"/></svg>
<div class="a" style="left:385px;top:980px;width:2082px;height:41px;background:#f1f1f1"></div>
<div class="a" style="left:385px;top:1021px;width:2082px;height:1px;background:#dedede"></div>
<div class="t" style="left:403.7px;top:993.7px;font-size:14.5px;color:#6e6e6e;font-weight:700;">Patient name</div>
<div class="t" style="left:611.5px;top:993.7px;font-size:14.5px;color:#6e6e6e;font-weight:700;">Provider name</div>
<div class="t" style="left:820.0px;top:993.7px;font-size:14.5px;color:#6e6e6e;font-weight:700;">Document type</div>
<div class="t" style="left:1028.6px;top:993.7px;font-size:14.5px;color:#6e6e6e;font-weight:700;">Document status</div>
<div class="t" style="left:1747.4px;top:993.7px;font-size:14.5px;color:#6e6e6e;font-weight:700;">Last updated date</div>
<div class="t" style="left:2173.0px;top:993.7px;font-size:14.5px;color:#6e6e6e;font-weight:700;">Actions</div>
<div class="a" style="left:385px;top:1034px;width:2082px;height:1px;background:#e0e0e0"></div>
<div class="t" style="left:403.7px;top:1055.6px;font-size:16.5px;color:#212121;font-weight:400;;letter-spacing:-0.106px">Test Demo</div>
<div class="t" style="left:611.5px;top:1055.6px;font-size:16.5px;color:#212121;font-weight:400;;letter-spacing:0.006px">Henry Test</div>
<div class="t" style="left:820.0px;top:1055.6px;font-size:16.5px;color:#212121;font-weight:400;;letter-spacing:-0.019px">Health Summary</div>
<div class="t" style="left:1028.6px;top:1055.6px;font-size:16.5px;color:#212121;font-weight:400;;letter-spacing:-0.025px">Completed</div>
<div class="t" style="left:1747.4px;top:1055.6px;font-size:16.5px;color:#212121;font-weight:400;letter-spacing:0.55px">29/09/2025</div>
<svg class="a" style="left:1958.4px;top:1049.6px;" width="30" height="30" viewBox="0 0 24 24"><path fill="#282a72" d="M12 4.5C7 4.5 2.73 7.61 1 12c1.730 4.39 6 7.5 11 7.5s9.27-3.11 11-7.5c-1.73-4.39-6-7.5-11-7.5zM12 17c-2.76 0-5-2.24-5-5s2.24-5 5-5 5 2.240 5 5-2.24 5-5 5zm0-8c-1.66 0-3 1.34-3 3s1.34 3 3 3 3-1.34 3-3-1.34-3-3-3z"/></svg>
<svg class="a" style="left:2018.4px;top:1049.6px;" width="30" height="30" viewBox="0 0 24 24"><path fill="#00cfc7" d="M3 17.25V21h3.75L17.81 9.94l-3.75-3.75L3 17.25zM20.71 7.04c.39-.39.39-1.02 0-1.41l-2.34-2.34c-.39-.39-1.02-.39-1.41 0l-1.83 1.83 3.75 3.75 1.83-1.83z"/></svg>
<svg class="a" style="left:2078.4px;top:1049.6px;" width="30" height="30" viewBox="0 0 24 24"><path fill="#5563f1" d="M19 8H5c-1.66 0-3 1.34-3 3v6h4v4h12v-4h4v-6c0-1.66-1.34-3-3-3zm-3 11H8v-5h8v5zm3-7c-.55 0-1-.45-1-1s.45-1 1-1 1 .45 1 1-.45 1-1 1zm-1-9H6v4h12V3z"/></svg>
<svg class="a" style="left:2138.4px;top:1049.6px;" width="30" height="30" viewBox="0 0 24 24"><path fill="#5563f1" d="M17 3H5c-1.11 0-2 .9-2 2v14c0 1.1.89 2 2 2h14c1.1 0 2-.9 2-2V7l-4-4zm-5 16c-1.66 0-3-1.34-3-3s1.34-3 3-3 3 1.34 3 3-1.34 3-3 3zm3-10H5V5h10v4z"/></svg>
<div class="a" style="left:385px;top:1095px;width:2082px;height:1px;background:#e0e0e0"></div>
<div class="t" style="left:2091.0px;top:1119.4px;font-size:15.5px;color:#6b6b6b;font-weight:400;">5 rows</div>
<svg class="a" style="left:2150.0px;top:1126.0px" width="13" height="7" viewBox="0 0 13 7"><path d="M0 0h13L6.5 7z" fill="#6b6b6b"/></svg>
<svg class="a" style="left:2187.2px;top:1114.2px;" width="30" height="30" viewBox="0 0 24 24"><path fill="#c2c2c2" d="M18.41 16.59L13.82 12l4.59-4.59L17 6l-6 6 6 6zM6 6h2v12H6z"/></svg>
<svg class="a" style="left:2247.2px;top:1114.2px;" width="30" height="30" viewBox="0 0 24 24"><path fill="#c2c2c2" d="M15.41 7.41L14 6l-6 6 6 6 1.41-1.41L10.83 12z"/></svg>
<div class="t" style="left:2293.0px;top:1119.4px;font-size:15.5px;color:#6b6b6b;font-weight:400;">1-1 of 1</div>
<svg class="a" style="left:2362.0px;top:1114.2px;" width="30" height="30" viewBox="0 0 24 24"><path fill="#c2c2c2" d="M10 6L8.59 7.41 13.17 12l-4.58 4.59L10 18l6-6z"/></svg>
<svg class="a" style="left:2422.0px;top:1114.2px;" width="30" height="30" viewBox="0 0 24 24"><path fill="#c2c2c2" d="M5.59 7.41L10.18 12l-4.59 4.59L7 18l6-6-6-6zM16 6h2v12h-2z"/></svg>
<div class="a" style="left:385px;top:1161px;width:2082px;height:1px;background:#e0e0e0"></div>
<div class="a" style="left:310px;top:1253px;width:2232px;height:4px;background:linear-gradient(#f1f1f1,#e6e6e6)"></div>
<div class="a" style="left:2470px;top:1180px;width:75px;height:75px;background:#0dc97f;border-radius:50%"></div>
<svg class="a" style="left:2487px;top:1202px" width="40" height="34" viewBox="0 0 40 34"><path d="M2 1h24a2 2 0 0 1 2 2v4H14a3 3 0 0 0-3 3v10H7l-5 5z" fill="#fff"/><path d="M15.5 8h25v27l-5-5H15.5a2.5 2.5 0 0 1-2.5-2.5V10.5a2.5 2.5 0 0 1 2.5-2.5z" fill="#0dc97f"/><path d="M16.5 9h22a1.5 1.5 0 0 1 1.5 1.5v24.2l-5-4.7H16.5a2 2 0 0 1-2-2V11a2 2 0 0 1 2-2z" fill="#fff"/><g fill="#0dc97f"><rect x="20" y="18.6" width="2.8" height="2.8"/><rect x="25.6" y="18.6" width="2.8" height="2.8"/><rect x="31" y="18.6" width="2.8" height="2.8"/></g></svg>
<svg class="a" style="left:0;top:0" width="2542" height="1257"><polygon points="1482.1,253.9 1907.2,481.2 1900.6,493.5 1939.7,494.6 1917.1,462.7 1910.5,475.0 1485.5,247.7" fill="#e94343" fill-opacity="0.95"/><polygon points="1211.8,965.8 1911.3,767.3 1915.1,780.8 1944.0,754.4 1905.6,747.1 1909.4,760.6 1209.8,959.0" fill="#e94343" fill-opacity="0.95"/></svg>
</body></html>
